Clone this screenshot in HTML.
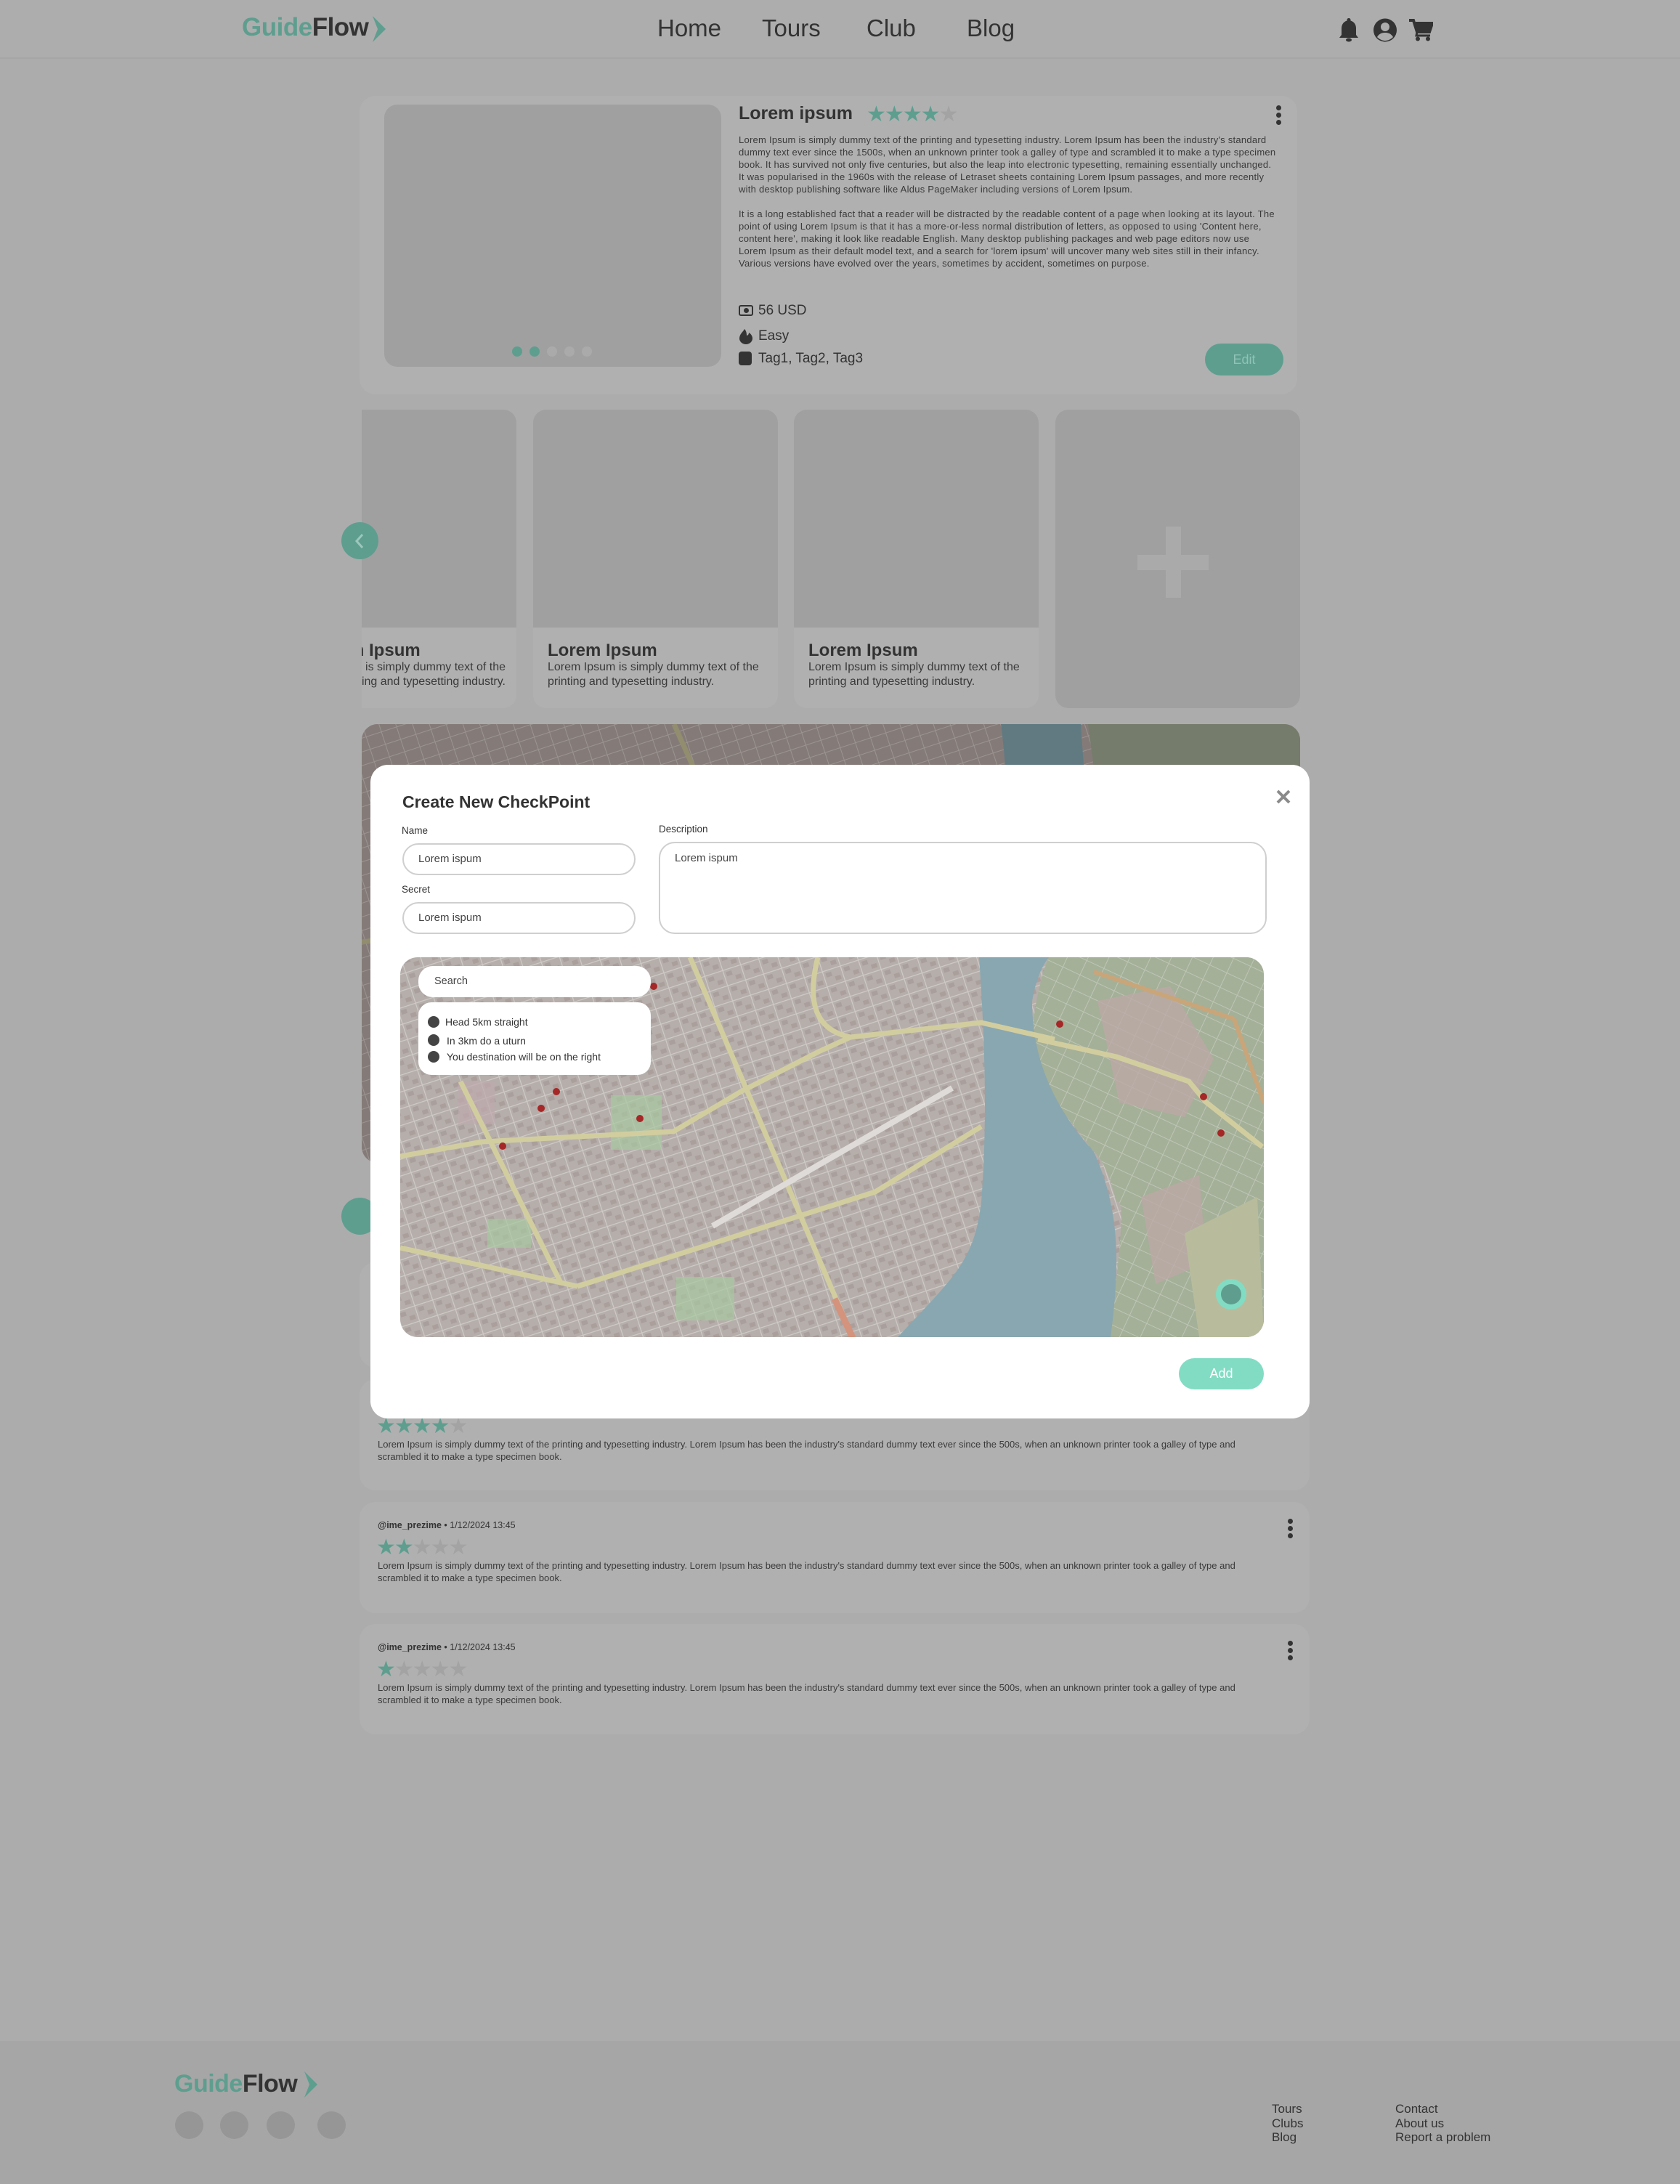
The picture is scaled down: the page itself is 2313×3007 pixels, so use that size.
<!DOCTYPE html>
<html><head><meta charset="utf-8"><style>
*{margin:0;padding:0;box-sizing:border-box}
body{width:2313px;height:3007px;background:#acacac;font-family:"Liberation Sans",sans-serif;position:relative;overflow:hidden;color:#333}
.a{position:absolute}
.hdr{left:0;top:0;width:2313px;height:81px;background:#adadad;border-bottom:2px solid #a6a6a6}
.logo{font-weight:bold;font-size:35px;letter-spacing:-0.5px}
.logo .g{color:#5e9e8f}.logo .f{color:#333}
.nav{font-size:33px;color:#333;top:20px}
.card{background:#b0b0b0;border-radius:22px}
.ph{background:#a0a0a0}
.p{font-size:12.6px;line-height:17px;color:#3a3a3a}
.star{color:#5e9e8f}.es{color:#a3a3a3}
.rev{left:495px;width:1308px;background:#b0b0b0;border-radius:22px}
.kb{width:7px;height:7px;border-radius:50%;background:#333;position:absolute}
.inp{border:2px solid #cfcfcf;border-radius:22px;background:#fff;font-size:15px;color:#444;padding-left:20px}
.fl{font-size:17px;color:#333;line-height:19.5px}
</style></head><body>

<div class="a hdr"></div>
<div class="a logo" style="left:333px;top:18px"><span class="g">Guide</span><span class="f">Flow</span></div>
<svg class="a" style="left:510px;top:20px" width="24" height="40"><path d="M3 2 L21 20 L3 38 L10 20 Z" fill="#5e9e8f"/></svg>
<div class="a nav" style="left:905px">Home</div>
<div class="a nav" style="left:1049px">Tours</div>
<div class="a nav" style="left:1193px">Club</div>
<div class="a nav" style="left:1331px">Blog</div>
<svg class="a" style="left:1843px;top:24px" width="28" height="34" viewBox="0 0 28 34"><path d="M14 1c-1.5 0-2.5 1-2.5 2.5v1C6.5 6 4 10 4 15v9l-3 4h26l-3-4v-9c0-5-2.5-9-7.5-10.5v-1C16.5 2 15.5 1 14 1z" fill="#333"/><ellipse cx="14" cy="31" rx="4" ry="2.5" fill="#333"/></svg>
<svg class="a" style="left:1890px;top:25px" width="34" height="33" viewBox="0 0 34 33"><circle cx="17" cy="16.5" r="16" fill="#333"/><circle cx="17" cy="12" r="6" fill="#adadad"/><path d="M6 26c3-5 7-6 11-6s8 1 11 6c-3 3-7 5-11 5s-8-2-11-5z" fill="#adadad"/></svg>
<svg class="a" style="left:1940px;top:25px" width="33" height="32" viewBox="0 0 33 32"><path d="M0 3h6l5 16h17l4-12H9" stroke="#333" stroke-width="4" fill="none"/><path d="M9 8h22l-4 10H12z" fill="#333"/><path d="M11 19l-1 5h19" stroke="#333" stroke-width="3" fill="none"/><circle cx="12" cy="28.5" r="3" fill="#333"/><circle cx="26" cy="28.5" r="3" fill="#333"/></svg>

<div class="a card" style="left:495px;top:132px;width:1291px;height:411px"></div>
<div class="a ph" style="left:529px;top:144px;width:464px;height:361px;border-radius:18px"></div>
<div class="a" style="left:705px;top:477px;width:110px;height:14px">
<span class="a" style="left:0;width:14px;height:14px;border-radius:50%;background:#5e9e8f"></span>
<span class="a" style="left:24px;width:14px;height:14px;border-radius:50%;background:#5e9e8f"></span>
<span class="a" style="left:48px;width:14px;height:14px;border-radius:50%;background:#aaa"></span>
<span class="a" style="left:72px;width:14px;height:14px;border-radius:50%;background:#aaa"></span>
<span class="a" style="left:96px;width:14px;height:14px;border-radius:50%;background:#aaa"></span>
</div>
<div class="a" style="left:1017px;top:142px;font-size:25px;font-weight:bold;color:#333">Lorem ipsum</div>
<div class="a" style="left:1193px;top:140px;font-size:30px;letter-spacing:-2px"><span class="star">★★★★</span><span class="es">★</span></div>
<div class="kb" style="left:1757px;top:145px"></div><div class="kb" style="left:1757px;top:155px"></div><div class="kb" style="left:1757px;top:165px"></div>
<div class="a p" style="left:1017px;top:184px;width:740px;font-size:13px;letter-spacing:0.25px">Lorem Ipsum is simply dummy text of the printing and typesetting industry. Lorem Ipsum has been the industry's standard dummy text ever since the 1500s, when an unknown printer took a galley of type and scrambled it to make a type specimen book. It has survived not only five centuries, but also the leap into electronic typesetting, remaining essentially unchanged. It was popularised in the 1960s with the release of Letraset sheets containing Lorem Ipsum passages, and more recently with desktop publishing software like Aldus PageMaker including versions of Lorem Ipsum.<br><br>It is a long established fact that a reader will be distracted by the readable content of a page when looking at its layout. The point of using Lorem Ipsum is that it has a more-or-less normal distribution of letters, as opposed to using 'Content here, content here', making it look like readable English. Many desktop publishing packages and web page editors now use Lorem Ipsum as their default model text, and a search for 'lorem ipsum' will uncover many web sites still in their infancy. Various versions have evolved over the years, sometimes by accident, sometimes on purpose.</div>
<div class="a" style="left:1017px;top:420px;width:20px;height:15px;border:2px solid #333;border-radius:3px"><div style="width:7px;height:7px;border-radius:50%;background:#333;margin:2px auto"></div></div>
<div class="a" style="left:1044px;top:417px;font-size:19px">56 USD</div>
<svg class="a" style="left:1017px;top:452px" width="20" height="22"><path d="M8 1C6 5 1 8 1 14a9 8 0 0 0 18 0c0-4-3-7-5-8 0 3-2 4-3 4 0-4-1-7-3-9z" fill="#333"/></svg>
<div class="a" style="left:1044px;top:452px;font-size:19px">Easy</div>
<div class="a" style="left:1017px;top:484px;width:18px;height:19px;background:#333;border-radius:4px"></div>
<div class="a" style="left:1044px;top:483px;font-size:19px">Tag1, Tag2, Tag3</div>
<div class="a" style="left:1659px;top:473px;width:108px;height:44px;border-radius:22px;background:#5e9e8f;color:#8fc3b6;font-size:18px;text-align:center;line-height:44px">Edit</div>

<div class="a card" style="left:498px;top:564px;width:213px;height:411px;border-radius:0 18px 18px 0;overflow:hidden"><div class="ph" style="height:300px"></div>
<div class="a" style="left:-70px;top:318px;font-size:24px;font-weight:bold;color:#333;white-space:nowrap">Lorem Ipsum</div>
<div class="a" style="left:-112px;top:345px;width:310px;font-size:16px;line-height:20px;color:#3a3a3a;text-align:right">Lorem Ipsum is simply dummy text of the printing and typesetting industry.</div></div>
<div class="a card" style="left:734px;top:564px;width:337px;height:411px;border-radius:18px;overflow:hidden"><div class="ph" style="height:300px"></div>
<div class="a" style="left:20px;top:318px;font-size:24px;font-weight:bold;color:#333">Lorem Ipsum</div>
<div class="a" style="left:20px;top:345px;width:300px;font-size:16px;line-height:20px;color:#3a3a3a">Lorem Ipsum is simply dummy text of the printing and typesetting industry.</div></div>
<div class="a card" style="left:1093px;top:564px;width:337px;height:411px;border-radius:18px;overflow:hidden"><div class="ph" style="height:300px"></div>
<div class="a" style="left:20px;top:318px;font-size:24px;font-weight:bold;color:#333">Lorem Ipsum</div>
<div class="a" style="left:20px;top:345px;width:300px;font-size:16px;line-height:20px;color:#3a3a3a">Lorem Ipsum is simply dummy text of the printing and typesetting industry.</div></div>
<div class="a ph" style="left:1453px;top:564px;width:337px;height:411px;border-radius:18px"></div>
<div class="a" style="left:1605px;top:725px;width:21px;height:98px;background:#aaa"></div>
<div class="a" style="left:1566px;top:764px;width:98px;height:21px;background:#aaa"></div>
<div class="a" style="left:470px;top:719px;width:51px;height:51px;border-radius:50%;background:#5e9e8f"></div>
<svg class="a" style="left:484px;top:732px" width="24" height="26"><path d="M15 4 L7 13 L15 22" stroke="#9cc7bc" stroke-width="3" fill="none"/></svg>

<div class="a" style="left:498px;top:997px;width:1292px;height:604px;border-radius:22px;overflow:hidden;background:#8b8381">
<svg width="1292" height="604"><defs><pattern id="bst" width="22" height="18" patternUnits="userSpaceOnUse" patternTransform="rotate(-18)"><rect width="22" height="18" fill="#847b78"/><path d="M0 0H22M0 0V18" stroke="#9a9491" stroke-width="2"/></pattern></defs><rect width="1292" height="604" fill="url(#bst)"/><path d="M880 0 C900 150 880 300 840 604 L1000 604 C1020 300 1000 150 990 0Z" fill="#617a82"/><path d="M1000 0 H1292 V604 H1010 C1040 300 1020 150 1000 0Z" fill="#757c6c"/><path d="M0 300 L400 250 L600 100 L900 80" stroke="#918d6e" stroke-width="7" fill="none"/><path d="M430 0 L700 604" stroke="#918d6e" stroke-width="7"/></svg></div>
<div class="a" style="left:470px;top:1649px;width:51px;height:51px;border-radius:50%;background:#5e9e8f"></div>

<div class="a rev" style="top:1738px;height:145px"></div>
<div class="a rev" style="top:1899px;height:153px"></div>
<div class="a" style="left:518px;top:1946px;font-size:30px;letter-spacing:-2px"><span class="star">★★★★</span><span class="es">★</span></div>
<div class="a p" style="left:520px;top:1980px;width:1185px;font-size:13px">Lorem Ipsum is simply dummy text of the printing and typesetting industry. Lorem Ipsum has been the industry's standard dummy text ever since the 500s, when an unknown printer took a galley of type and scrambled it to make a type specimen book.</div>

<div class="a rev" style="top:2068px;height:153px"></div>
<div class="a" style="left:520px;top:2093px;font-size:12.5px;color:#333"><b>@ime_prezime</b> • 1/12/2024 13:45</div>
<div class="a" style="left:518px;top:2113px;font-size:30px;letter-spacing:-2px"><span class="star">★★</span><span class="es">★★★</span></div>
<div class="a p" style="left:520px;top:2147px;width:1185px;font-size:13px">Lorem Ipsum is simply dummy text of the printing and typesetting industry. Lorem Ipsum has been the industry's standard dummy text ever since the 500s, when an unknown printer took a galley of type and scrambled it to make a type specimen book.</div>
<div class="kb" style="left:1773px;top:2091px"></div><div class="kb" style="left:1773px;top:2101px"></div><div class="kb" style="left:1773px;top:2111px"></div>

<div class="a rev" style="top:2236px;height:152px"></div>
<div class="a" style="left:520px;top:2261px;font-size:12.5px;color:#333"><b>@ime_prezime</b> • 1/12/2024 13:45</div>
<div class="a" style="left:518px;top:2281px;font-size:30px;letter-spacing:-2px"><span class="star">★</span><span class="es">★★★★</span></div>
<div class="a p" style="left:520px;top:2315px;width:1185px;font-size:13px">Lorem Ipsum is simply dummy text of the printing and typesetting industry. Lorem Ipsum has been the industry's standard dummy text ever since the 500s, when an unknown printer took a galley of type and scrambled it to make a type specimen book.</div>
<div class="kb" style="left:1773px;top:2259px"></div><div class="kb" style="left:1773px;top:2269px"></div><div class="kb" style="left:1773px;top:2279px"></div>

<div class="a" style="left:0;top:2810px;width:2313px;height:197px;background:#a6a6a6"></div>
<div class="a logo" style="left:240px;top:2850px;font-size:34px"><span class="g">Guide</span><span class="f">Flow</span></div>
<svg class="a" style="left:416px;top:2850px" width="24" height="40"><path d="M3 2 L21 20 L3 38 L10 20 Z" fill="#5e9e8f"/></svg>
<div class="a" style="left:241px;top:2907px;width:39px;height:38px;border-radius:50%;background:#969696"></div>
<div class="a" style="left:303px;top:2907px;width:39px;height:38px;border-radius:50%;background:#969696"></div>
<div class="a" style="left:367px;top:2907px;width:39px;height:38px;border-radius:50%;background:#969696"></div>
<div class="a" style="left:437px;top:2907px;width:39px;height:38px;border-radius:50%;background:#969696"></div>
<div class="a fl" style="left:1751px;top:2894px">Tours<br>Clubs<br>Blog</div>
<div class="a fl" style="left:1921px;top:2894px">Contact<br>About us<br>Report a problem</div>

<div class="a" style="left:510px;top:1053px;width:1293px;height:900px;background:#fff;border-radius:24px"></div>
<div class="a" style="left:554px;top:1091px;font-size:23px;font-weight:bold;color:#333">Create New CheckPoint</div>
<svg class="a" style="left:1756px;top:1086px" width="22" height="22"><path d="M3 3L19 19M19 3L3 19" stroke="#8a8a8a" stroke-width="4"/></svg>
<div class="a" style="left:553px;top:1136px;font-size:13.5px;color:#333">Name</div>
<div class="a inp" style="left:554px;top:1161px;width:321px;height:44px;line-height:40px">Lorem ispum</div>
<div class="a" style="left:553px;top:1217px;font-size:13.5px;color:#333">Secret</div>
<div class="a inp" style="left:554px;top:1242px;width:321px;height:44px;line-height:40px">Lorem ispum</div>
<div class="a" style="left:907px;top:1134px;font-size:13.5px;color:#333">Description</div>
<div class="a inp" style="left:907px;top:1159px;width:837px;height:127px;padding-top:12px">Lorem ispum</div>

<div class="a" style="left:551px;top:1318px;width:1189px;height:523px;border-radius:24px;overflow:hidden">
<svg width="1189" height="523" viewBox="0 0 1189 523">
<defs><pattern id="st" width="26" height="22" patternUnits="userSpaceOnUse" patternTransform="rotate(-18)"><rect width="26" height="22" fill="#b5aeab"/><path d="M0 0H26M0 0V22" stroke="#cfcac6" stroke-width="2.5"/><rect x="4" y="4" width="8" height="6" fill="#a99f9c"/><rect x="15" y="12" width="8" height="6" fill="#ab9f9c"/></pattern>
<pattern id="st2" width="26" height="22" patternUnits="userSpaceOnUse" patternTransform="rotate(25)"><rect width="26" height="22" fill="#a4b098"/><path d="M0 0H26M0 0V22" stroke="#bec5b5" stroke-width="2"/></pattern></defs>
<rect width="1189" height="523" fill="url(#st)"/>
<path d="M893 0 H1189 V523 H978 C990 400 1000 330 986 337 C975 290 960 270 955 268 C920 220 880 180 870 130 C868 90 880 30 893 0Z" fill="url(#st2)"/>
<path d="M960 60 L1060 40 L1120 140 L1080 220 L990 200Z" fill="#bba9a6" opacity="0.8"/>
<path d="M1020 330 L1100 300 L1110 420 L1040 450Z" fill="#bba9a6" opacity="0.8"/>
<path d="M1080 380 L1180 330 L1189 523 L1100 523Z" fill="#b8bc9c"/>
<rect x="290" y="190" width="70" height="75" fill="#a8c7a0" opacity="0.7"/>
<rect x="120" y="360" width="60" height="40" fill="#a8c7a0" opacity="0.7"/>
<rect x="380" y="440" width="80" height="60" fill="#a8c7a0" opacity="0.7"/>
<rect x="80" y="170" width="50" height="60" fill="#bfa9ae" opacity="0.7"/>
<path d="M797 0 C806 130 808 233 800 337 C790 420 762 440 685 523 L978 523 C994 405 986 337 955 268 C893 199 870 130 870 61 C875 30 885 10 893 0Z" fill="#89a7b0"/>
<g fill="none" stroke="#d2cd9f" stroke-width="7" stroke-linejoin="round">
<path d="M0 274 L113 254 L376 240 L469 185 L576 130 L620 110 L800 90 L901 113"/>
<path d="M244 453 L654 323 L800 233"/>
<path d="M399 0 L623 524"/>
<path d="M83 171 L222 450"/>
<path d="M878 113 L986 137 L1086 171 L1109 199 L1187 261"/>
<path d="M0 400 L244 453"/>
<path d="M575 0 C560 60 570 100 620 110"/>
</g>
<path d="M955 20 L1148 85 L1189 200" stroke="#c9a57a" stroke-width="6" fill="none"/>
<path d="M430 370 L760 180" stroke="#dedbd8" stroke-width="8" fill="none"/>
<path d="M598 470 L623 524" stroke="#d4937c" stroke-width="9"/>
<g fill="#a62727"><circle cx="349" cy="40" r="5"/><circle cx="215" cy="185" r="5"/><circle cx="194" cy="208" r="5"/><circle cx="330" cy="222" r="5"/><circle cx="141" cy="260" r="5"/><circle cx="908" cy="92" r="5"/><circle cx="1106" cy="192" r="5"/><circle cx="1130" cy="242" r="5"/></g>
<circle cx="1144" cy="464" r="21" fill="#82dcc3"/><circle cx="1144" cy="464" r="14" fill="#5f9e8f"/>
</svg>
<div class="a" style="left:25px;top:12px;width:320px;height:43px;background:#fff;border-radius:20px;font-size:14.5px;color:#444;line-height:43px;padding-left:22px">Search</div>
<div class="a" style="left:25px;top:62px;width:320px;height:100px;background:#fff;border-radius:18px;font-size:14px;color:#333">
<div class="a" style="left:13px;top:19px;width:16px;height:16px;border-radius:50%;background:#444"></div><div class="a" style="left:37px;top:19px">Head 5km straight</div>
<div class="a" style="left:13px;top:44px;width:16px;height:16px;border-radius:50%;background:#444"></div><div class="a" style="left:39px;top:45px">In 3km do a uturn</div>
<div class="a" style="left:13px;top:67px;width:16px;height:16px;border-radius:50%;background:#444"></div><div class="a" style="left:39px;top:67px">You destination will be on the right</div>
</div>
</div>
<div class="a" style="left:1623px;top:1870px;width:117px;height:43px;border-radius:22px;background:#82dcc3;color:#fff;font-size:18px;text-align:center;line-height:43px">Add</div>
</body></html>
